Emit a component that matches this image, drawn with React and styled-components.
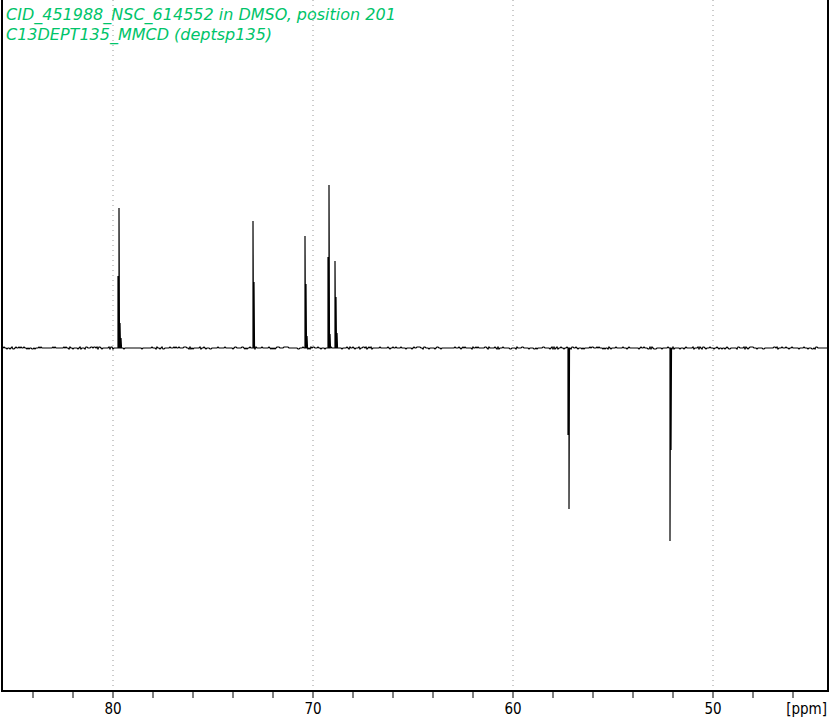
import React from "react";
import styled, { createGlobalStyle } from "styled-components";

const Global = createGlobalStyle`
  html, body { margin: 0; padding: 0; background: #fff; }
`;

const Frame = styled.div`
  position: relative;
  width: 831px;
  height: 720px;
  background: #fff;
  overflow: hidden;
`;

const Title = styled.div`
  position: absolute;
  left: 6px;
  top: 5px;
  font-family: "DejaVu Sans", Verdana, sans-serif;
  font-style: italic;
  font-size: 16px;
  line-height: 20px;
  color: #00c46a;
  letter-spacing: 0px;
`;

const X = (ppm) => 113 + (80 - ppm) * 20;
const BASE = 348;

function rand(seed) {
  let s = seed;
  return () => {
    s = (s * 9301 + 49297) % 233280;
    return s / 233280;
  };
}

const peaks = [
  { ppm: 79.7, top: 208, sub: [[-1, 276], [1, 323], [2, 338]] },
  { ppm: 73.0, top: 221, sub: [[1, 282]] },
  { ppm: 70.4, top: 236, sub: [[1, 284], [2, 336]] },
  { ppm: 69.2, top: 185, sub: [[-1, 257], [1, 334]] },
  { ppm: 68.9, top: 261, sub: [[1, 297], [2, 333]] },
  { ppm: 57.2, top: 509, sub: [[-1, 435]] },
  { ppm: 52.15, top: 541, sub: [[1, 450]] },
];

function spectrumPath() {
  const r = rand(7);
  let d = `M2 ${BASE}`;
  const map = {};
  peaks.forEach((p) => {
    const x = Math.round(X(p.ppm));
    map[x] = p.top;
    p.sub.forEach(([dx, y]) => (map[x + dx] = y));
  });
  for (let x = 2; x <= 828; x++) {
    if (map[x] !== undefined) {
      d += ` L${x} ${BASE} L${x} ${map[x]} L${x + 0.5} ${BASE}`;
    } else {
      const n = r() < 0.3 ? (r() < 0.5 ? -1 : 1) : 0;
      d += ` L${x} ${BASE + n}`;
    }
  }
  return d;
}

const ticks = [];
for (let p = 84; p >= 46; p -= 2) ticks.push(p);

const FONT = "'DejaVu Sans Condensed', 'DejaVu Sans', sans-serif";

export default function App() {
  const path = spectrumPath();
  return (
    <>
      <Global />
      <Frame>
        <svg width="831" height="720" style={{ display: "block" }}>
          {[80, 70, 60, 50].map((p) => (
            <line key={p} x1={X(p)} x2={X(p)} y1={0} y2={691} stroke="#999" strokeDasharray="1 4" />
          ))}
          <path d={path} fill="none" stroke="#000" strokeWidth="1.2" />
          <line x1="2" x2="2" y1="0" y2="692" stroke="#000" strokeWidth="2" />
          <line x1="828" x2="828" y1="0" y2="692" stroke="#000" strokeWidth="2" />
          <line x1="1" x2="829" y1="691" y2="691" stroke="#000" strokeWidth="2" />
          {ticks.map((p) => (
            <line key={p} x1={X(p)} x2={X(p)} y1={691} y2={698} stroke="#000" strokeWidth="1" />
          ))}
          {[80, 70, 60, 50].map((p) => (
            <text key={p} x={X(p)} y={714} textAnchor="middle" fontFamily={FONT} fontSize="15" fill="#000">
              {p}
            </text>
          ))}
          <text x={827} y={714} textAnchor="end" fontFamily={FONT} fontSize="15" fill="#000">
            [ppm]
          </text>
        </svg>
        <Title>
          <div>CID_451988_NSC_614552 in DMSO, position 201</div>
          <div>C13DEPT135_MMCD (deptsp135)</div>
        </Title>
      </Frame>
    </>
  );
}
